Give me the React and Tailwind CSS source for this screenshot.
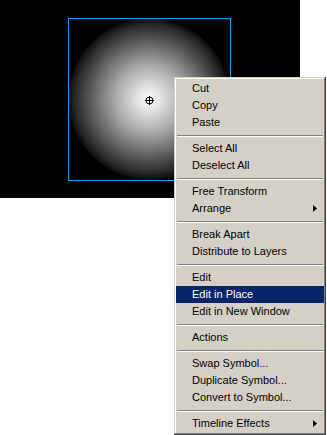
import React from "react";

const groups = [
  [{ t: "Cut" }, { t: "Copy" }, { t: "Paste" }],
  [{ t: "Select All" }, { t: "Deselect All" }],
  [{ t: "Free Transform" }, { t: "Arrange", sub: true }],
  [{ t: "Break Apart" }, { t: "Distribute to Layers" }],
  [{ t: "Edit" }, { t: "Edit in Place", active: true }, { t: "Edit in New Window" }],
  [{ t: "Actions" }],
  [{ t: "Swap Symbol..." }, { t: "Duplicate Symbol..." }, { t: "Convert to Symbol..." }],
  [{ t: "Timeline Effects", sub: true }],
];

function Arrow({ active }) {
  return (
    <svg width="4" height="7" viewBox="0 0 4 7" className="ml-auto mr-[7px]">
      <polygon points="0,0 4,3.5 0,7" fill={active ? "#fff" : "#000"} />
    </svg>
  );
}

function Item({ t, sub, active }) {
  return (
    <div
      className={
        "flex h-[17px] items-center pl-[16px] leading-[17px] whitespace-nowrap " +
        (active ? "bg-[#0a246a] text-white" : "text-black")
      }
    >
      <span>{t}</span>
      {sub && <Arrow active={active} />}
    </div>
  );
}

function Sep() {
  return (
    <div className="flex h-[9px] flex-col justify-center px-[1px]">
      <div className="h-[2px] border-t border-b border-t-[#808080] border-b-white" />
    </div>
  );
}

export default function App() {
  return (
    <div
      className="relative h-[435px] w-[327px] overflow-hidden bg-white"
      style={{ fontFamily: '"Liberation Sans", Arial, sans-serif' }}
    >
      <div className="relative h-[198px] w-[300px] bg-[radial-gradient(circle_81px_at_149px_99px,#ffffff_0%,#e4e4e4_14%,#a8a8a8_42%,#606060_70%,#262626_92%,#0c0c0c_99%,#000000_100%)]">
        <div className="absolute left-[68px] top-[18px] h-[163px] w-[163px] border border-[#0aa0f0]" />
        <svg
          width="9"
          height="9"
          viewBox="0 0 9 9"
          className="absolute left-[145px] top-[96px]"
        >
          <circle cx="4.5" cy="4.5" r="3.5" fill="none" stroke="#000" strokeWidth="1" />
          <line x1="4.5" y1="0" x2="4.5" y2="9" stroke="#000" strokeWidth="1" />
          <line x1="0" y1="4.5" x2="9" y2="4.5" stroke="#000" strokeWidth="1" />
        </svg>
      </div>

      <div className="absolute left-[174px] top-[77px] w-[152px] bg-[#d4d0c8] px-[2px] py-[3px] text-[11px] shadow-[inset_-1px_-1px_#404040,inset_1px_1px_#d4d0c8,inset_-2px_-2px_#808080,inset_2px_2px_#ffffff]">
        {groups.map((g, gi) => (
          <React.Fragment key={gi}>
            {gi > 0 && <Sep />}
            {g.map((it) => (
              <Item key={it.t} {...it} />
            ))}
          </React.Fragment>
        ))}
      </div>
    </div>
  );
}
